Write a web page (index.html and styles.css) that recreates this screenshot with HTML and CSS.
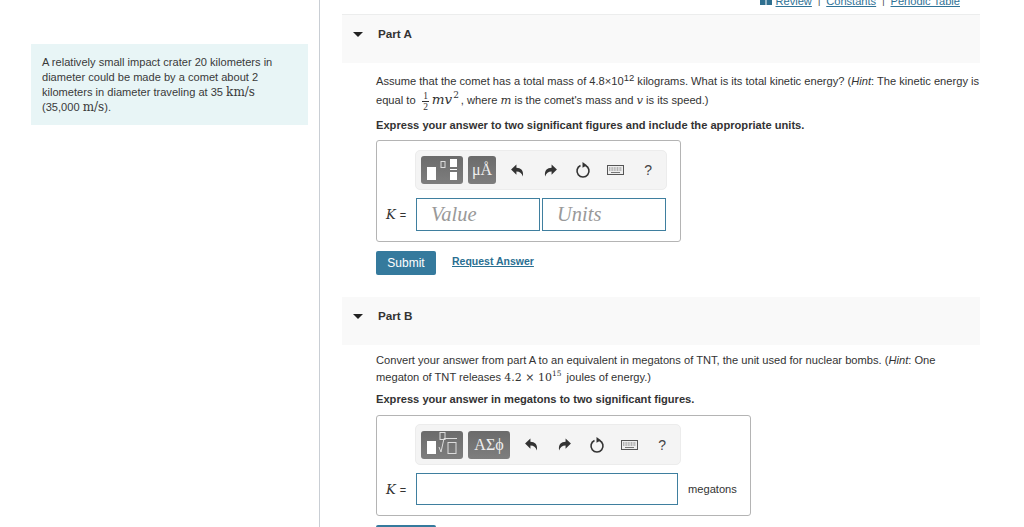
FILE: index.html
```html
<!DOCTYPE html>
<html lang="en">
<head>
<meta charset="utf-8">
<title>Comet problem</title>
<link rel="stylesheet" href="styles.css">
</head>
<body>
<div class="page">
  <aside class="left">
    <div class="callout">A relatively small impact crater 20 kilometers in diameter could be made by a comet about 2 kilometers in diameter traveling at 35 <span class="math mkm">km/s</span> (35,000 <span class="math mms">m/s</span>).</div>
  </aside>
  <main class="main">
    <nav class="toplinks">
      <svg class="book" width="12" height="6" viewBox="0 0 12 6"><rect width="5.500" height="6" fill="#2f6f8f"/><rect x="6.500" width="5.500" height="6" fill="#2f6f8f"/></svg>
      <a class="tl">Review</a><span class="sep">|</span><a class="tl">Constants</a><span class="sep">|</span><a class="tl">Periodic Table</a>
    </nav>
    <section class="part parta">
      <header class="parthead"><span class="caret"></span><h2>Part A</h2></header>
      <div class="body">
        <p class="q1">Assume that the comet has a total mass of 4.8×10<sup class="sup">12</sup> kilograms. What is its total kinetic energy? (<i>Hint</i>: The kinetic energy is</p>
        <p class="q2">equal to <span class="frac"><span>1</span><span class="den">2</span></span><span class="math it mmv">mv</span><sup class="msup">2</sup>, where <span class="math it mi">m</span> is the comet's mass and <span class="math it mi">v</span> is its speed.)</p>
        <p class="ask">Express your answer to two significant figures and include the appropriate units.</p>
        <div class="box boxa">
          <div class="toolbar tba">
            <button class="tool t1" aria-label="templates">
              <svg width="34" height="27" viewBox="0 0 34 27"><rect x="2" y="10" width="9" height="13" fill="#fff"/><rect x="16" y="4.500" width="4" height="6" fill="none" stroke="#ddd" stroke-width="1"/><rect x="25" y="2" width="7" height="8" fill="#fff"/><rect x="25" y="12" width="7" height="1" fill="#fff"/><rect x="25" y="15" width="7" height="8" fill="#fff"/></svg>
            </button>
            <button class="tool t2">μÅ</button>
            <div class="icons">
              <svg class="ic" width="15" height="15" viewBox="0 0 14 14"><path d="M1 6 6 1.500V4.500C10 4.500 13 7 12 12.500 11 9.500 9 8 6 8V11Z" fill="#333"/></svg>
              <svg class="ic" width="15" height="15" viewBox="0 0 14 14"><path d="M13 6 8 1.500V4.500C4 4.500 1 7 2 12.500 3 9.500 5 8 8 8V11Z" fill="#333"/></svg>
              <svg class="ic" width="16" height="16" viewBox="0 0 16 16"><path d="M5.500 3.500A6 6 0 1 0 10.500 3.500" fill="none" stroke="#333" stroke-width="1.600"/><path d="M6 0 10.500 3.300 6 5.800Z" fill="#333" transform="translate(1.500 0)"/></svg>
              <svg class="ic" width="17" height="10" viewBox="0 0 17 10"><rect x=".5" y=".5" width="16" height="9" fill="#eee" stroke="#555"/><path d="M2 3H15M2 5H15" stroke="#777" stroke-dasharray="1 .6"/><path d="M4 7.500H13" stroke="#777"/></svg>
              <span class="help">?</span>
            </div>
          </div>
          <div class="inputrow">
            <span class="klabel"><i class="math mk">K</i><span class="eq">=</span></span>
            <div class="field fval">Value</div>
            <div class="field fun">Units</div>
          </div>
        </div>
        <div class="actions">
          <button class="submit">Submit</button>
          <a class="req">Request Answer</a>
        </div>
      </div>
    </section>
    <section class="part partb">
      <header class="parthead"><span class="caret"></span><h2>Part B</h2></header>
      <div class="body">
        <p class="q1b">Convert your answer from part A to an equivalent in megatons of TNT, the unit used for nuclear bombs. (<i>Hint</i>: One</p>
        <p class="q2b">megaton of TNT releases <span class="math">4.2 × 10<sup class="msup2">15</sup></span> joules of energy.)</p>
        <p class="ask askb">Express your answer in megatons to two significant figures.</p>
        <div class="box boxb">
          <div class="toolbar tbb">
            <button class="tool t1" aria-label="templates">
              <svg width="34" height="27" viewBox="0 0 34 27"><rect x="2" y="10" width="9" height="13" fill="#fff"/><rect x="15" y="1.500" width="5" height="7" fill="none" stroke="#ddd"/><path d="M14 16 16 21 19 7.500H32" fill="none" stroke="#ddd"/><rect x="23" y="11.500" width="8" height="11" fill="none" stroke="#ddd"/></svg>
            </button>
            <button class="tool t3">ΑΣϕ</button>
            <div class="icons">
              <svg class="ic" width="15" height="15" viewBox="0 0 14 14"><path d="M1 6 6 1.500V4.500C10 4.500 13 7 12 12.500 11 9.500 9 8 6 8V11Z" fill="#333"/></svg>
              <svg class="ic" width="15" height="15" viewBox="0 0 14 14"><path d="M13 6 8 1.500V4.500C4 4.500 1 7 2 12.500 3 9.500 5 8 8 8V11Z" fill="#333"/></svg>
              <svg class="ic" width="16" height="16" viewBox="0 0 16 16"><path d="M5.500 3.500A6 6 0 1 0 10.500 3.500" fill="none" stroke="#333" stroke-width="1.600"/><path d="M6 0 10.500 3.300 6 5.800Z" fill="#333" transform="translate(1.500 0)"/></svg>
              <svg class="ic" width="17" height="10" viewBox="0 0 17 10"><rect x=".5" y=".5" width="16" height="9" fill="#eee" stroke="#555"/><path d="M2 3H15M2 5H15" stroke="#777" stroke-dasharray="1 .6"/><path d="M4 7.500H13" stroke="#777"/></svg>
              <span class="help">?</span>
            </div>
          </div>
          <div class="inputrow">
            <span class="klabel"><i class="math mk">K</i><span class="eq">=</span></span>
            <div class="field fwide"></div>
            <span class="unit">megatons</span>
          </div>
        </div>
        <div class="submitstub"></div>
      </div>
    </section>
  </main>
</div>
</body>
</html>
```
FILE: styles.css
```css
* { box-sizing: border-box; }
html, body { margin: 0; padding: 0; height: 527px; overflow: hidden; background: #fff; }
body { font-family: "Liberation Sans", Arial, sans-serif; font-size: 11.130px; color: #333; }
p { margin: 0; }
.page { display: flex; height: 527px; }
.left { width: 320px; flex: none; border-right: 1px solid #c9ced4; padding: 44px 0 0 31px; }
.callout { width: 277px; height: 81px; background: #e8f5f6; padding: 11px 20px 0 11px; font-size: 11.080px; line-height: 14.850px; color: #3a3a3a; }
.math { font-family: "DejaVu Serif", serif; font-size: 11px; line-height: 1; }
.mkm { font-size: 12px; }
.mms { font-size: 12px; }
.mmv { font-size: 13.500px; }
.mi { font-size: 11.500px; }
.mk { font-size: 13px; }
.it { font-style: italic; }
.main { width: 638px; margin-left: 22px; flex: none; }
.toplinks { margin-top: -7px; height: 22px; display: flex; align-items: flex-end; justify-content: flex-end; padding: 0 20px 7px 0; color: #2f7296; font-size: 11.100px; line-height: 12px; border-bottom: 1px solid #eceded; }
.book { margin-right: 4px; margin-bottom: 2px; }
.tl { text-decoration: underline; }
.sep { margin: 0 6px; color: #444; font-size: 9px; }
.parthead { height: 48px; background: #f9f9f9; display: flex; align-items: flex-start; padding: 12px 0 0 11px; }
.caret { width: 0; height: 0; border-left: 5px solid transparent; border-right: 5px solid transparent; border-top: 5px solid #222; margin-top: 5px; }
h2 { margin: 0 0 0 15px; font-size: 11.700px; line-height: 13px; font-weight: 700; color: #333; }
.body { padding-left: 34px; }
.q1 { margin-top: 11px; line-height: 14px; white-space: nowrap; }
.sup { font-size: 9.500px; line-height: 0; vertical-align: 4px; }
.q2 { margin-top: 2px; height: 22px; line-height: 21px; white-space: nowrap; }
.frac { display: inline-flex; flex-direction: column; align-items: center; vertical-align: middle; font-family: "Liberation Serif", serif; font-size: 9.500px; line-height: 10px; width: 8px; margin: 0 2px 0 3px; }
.den { border-top: 1px solid #333; width: 7px; text-align: center; }
.msup { font-family: "DejaVu Serif", serif; font-size: 9px; line-height: 0; vertical-align: 6px; margin-left: 1px; margin-right: 2px; }
.msup2 { font-size: 7.500px; line-height: 0; vertical-align: 5px; margin-right: 2px; }
.ask { margin-top: 6px; font-weight: 700; line-height: 14px; white-space: nowrap; }
.box { margin-top: 8px; border: 1px solid #b4b4b4; border-radius: 3px; background: #fff; }
.boxa { width: 305px; height: 102px; }
.boxb { width: 375px; height: 101px; margin-top: 9px; }
.toolbar { margin-left: 38px; border: 1px solid #ececec; border-radius: 5px; background: #f4f4f4; display: flex; align-items: center; padding: 0 0 0 5px; gap: 5px; }
.tba { width: 252px; height: 40px; margin-top: 9px; }
.tbb { width: 266px; height: 41px; margin-top: 8px; }
.tool { height: 28px; border: 0; border-radius: 3px; background: linear-gradient(#6b6b6b, #7e7e7e); color: #eee; padding: 0; display: flex; align-items: center; justify-content: center; font-family: "Liberation Serif", serif; }
.t1 { width: 42px; }
.t2 { width: 28px; font-size: 16px; }
.t3 { width: 42px; font-size: 16px; }
.icons { display: grid; grid-template-columns: repeat(5, 32.700px); justify-items: center; align-items: center; }
.ic { flex: none; }
.help { font-size: 14px; color: #444; }
.inputrow { display: flex; align-items: center; margin: 8px 0 0 9px; }
.klabel { width: 30px; font-size: 11px; white-space: nowrap; }
.eq { font-size: 11px; margin-left: 4px; }
.field { height: 33px; border: 1px solid #3f7f9f; background: #fff; font-family: "Liberation Serif", serif; font-style: italic; font-size: 20.500px; line-height: 31px; color: #999; padding-left: 14px; }
.fval { width: 124px; margin-right: 2px; }
.fun { width: 124px; }
.fwide { width: 262px; height: 32px; }
.unit { margin-left: 10px; }
.actions { display: flex; align-items: center; margin-top: 9px; }
.submit { width: 60px; height: 24px; border: 0; border-radius: 2px; background: #357a9d; color: #fff; font: 12px "Liberation Sans", Arial, sans-serif; padding: 0; }
.req { margin-left: 16px; margin-bottom: 5px; color: #2a6f92; font-weight: 700; font-size: 10.500px; text-decoration: underline; }
.partb { margin-top: 22px; }
.q1b { margin-top: 8px; line-height: 14px; white-space: nowrap; }
.q2b { margin-top: 2px; line-height: 16px; white-space: nowrap; }
.askb { margin-top: 7px; }
.submitstub { margin-top: 9px; width: 60px; height: 24px; background: #357a9d; border-radius: 2px; }
```
